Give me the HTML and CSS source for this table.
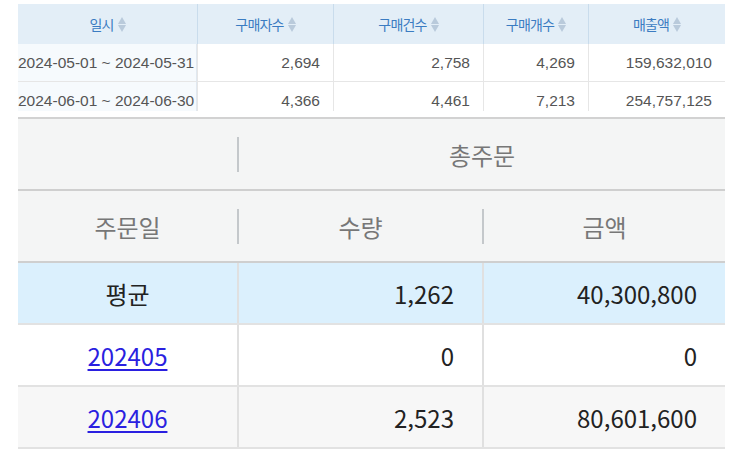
FILE: index.html
```html
<!DOCTYPE html>
<html lang="ko">
<head>
<meta charset="utf-8">
<link rel="stylesheet" href="styles.css">
</head>
<body>
<div class="page">
  <div class="top-scroll">
    <div class="top">
      <div class="th">일시<span class="sort"><i class="up"></i><i class="dn"></i></span></div>
      <div class="th">구매자수<span class="sort"><i class="up"></i><i class="dn"></i></span></div>
      <div class="th">구매건수<span class="sort"><i class="up"></i><i class="dn"></i></span></div>
      <div class="th">구매개수<span class="sort"><i class="up"></i><i class="dn"></i></span></div>
      <div class="th">매출액<span class="sort"><i class="up"></i><i class="dn"></i></span></div>

      <div class="td first">2024-05-01 ~ 2024-05-31</div>
      <div class="td">2,694</div>
      <div class="td">2,758</div>
      <div class="td">4,269</div>
      <div class="td">159,632,010</div>

      <div class="td first">2024-06-01 ~ 2024-06-30</div>
      <div class="td">4,366</div>
      <div class="td">4,461</div>
      <div class="td">7,213</div>
      <div class="td">254,757,125</div>
    </div>
  </div>

  <div class="summary">
    <div class="hrow">
      <div class="hc w1"></div>
      <div class="sep"></div>
      <div class="hc w23">총주문</div>
    </div>
    <div class="hrow">
      <div class="hc w1">주문일</div>
      <div class="sep"></div>
      <div class="hc w2">수량</div>
      <div class="sep"></div>
      <div class="hc w3">금액</div>
    </div>
    <div class="drow avg">
      <div class="dc label">평균</div>
      <div class="dc num">1,262</div>
      <div class="dc num">40,300,800</div>
    </div>
    <div class="drow">
      <div class="dc label"><a href="#">202405</a></div>
      <div class="dc num">0</div>
      <div class="dc num">0</div>
    </div>
    <div class="drow alt">
      <div class="dc label"><a href="#">202406</a></div>
      <div class="dc num">2,523</div>
      <div class="dc num">80,601,600</div>
    </div>
  </div>
</div>
</body>
</html>
```

FILE: styles.css
```css
html, body {
  margin: 0;
  padding: 0;
  background: #ffffff;
}

.page {
  padding: 4px 12px 0 18px;
  width: 707px;
}

.top-scroll {
  height: 107px;
  overflow: hidden;
}

.top {
  display: grid;
  grid-template-columns: 179px 136px 150px 105px 137px;
  grid-auto-rows: 38px;
  grid-template-rows: 40px;
}

.th {
  background: #e3eef7;
  color: #3b7cc2;
  font-family: "Noto Sans CJK KR", "Liberation Sans", sans-serif;
  font-size: 14px;
  display: flex;
  align-items: center;
  justify-content: center;
  border-left: 1px solid #c9dcec;
  letter-spacing: -0.8px;
}

.th:first-child {
  border-left: none;
}

.sort {
  display: inline-flex;
  flex-direction: column;
  gap: 1px;
  margin-left: 4px;
}

.sort i {
  display: block;
  width: 0;
  height: 0;
  border-left: 4.5px solid transparent;
  border-right: 4.5px solid transparent;
}

.sort .up {
  border-bottom: 7px solid #b9cadb;
}

.sort .dn {
  border-top: 7px solid #b9cadb;
}

.td {
  font-family: "Liberation Sans", Arial, sans-serif;
  font-size: 15.5px;
  color: #555555;
  display: flex;
  align-items: center;
  justify-content: flex-end;
  padding-right: 13px;
  border-left: 1px solid #e6e6e6;
  border-bottom: 1px solid #e6e6e6;
  white-space: nowrap;
}

.td.first {
  border-left: none;
  justify-content: flex-start;
  padding-right: 0;
  background: #f6fafd;
  border-right: 1px solid #e0e8f0;
  overflow: hidden;
}

.summary {
  margin-top: 6px;
  border-top: 2px solid #d2d2d2;
  font-family: "Noto Sans CJK KR", "Noto Sans", sans-serif;
  font-size: 24px;
}

.hrow {
  display: flex;
  align-items: center;
  height: 70px;
  background: #f4f5f5;
  border-bottom: 2px solid #cfcfcf;
  color: #777777;
}

.hc {
  text-align: center;
}

.w1 { width: 219px; }
.w2 { width: 243px; }
.w3 { width: 241px; }
.w23 { width: 486px; }

.sep {
  width: 2px;
  height: 35px;
  background: #c4c8cb;
}

.drow {
  display: grid;
  grid-template-columns: 221px 245px 241px;
  height: 60px;
  border-bottom: 2px solid #e2e2e2;
  color: #222222;
  background: #ffffff;
}

.drow.avg {
  background: #dbf0fd;
}

.drow.alt {
  background: #f7f7f7;
}

.dc {
  display: flex;
  align-items: center;
  border-right: 2px solid #e0e0e0;
}

.dc:last-child {
  border-right: none;
}

.dc.label {
  justify-content: center;
}

.dc.num {
  justify-content: flex-end;
  padding-right: 28px;
}

.dc a {
  color: #2a1fe0;
  text-decoration: underline;
  text-underline-offset: 3px;
}
```
